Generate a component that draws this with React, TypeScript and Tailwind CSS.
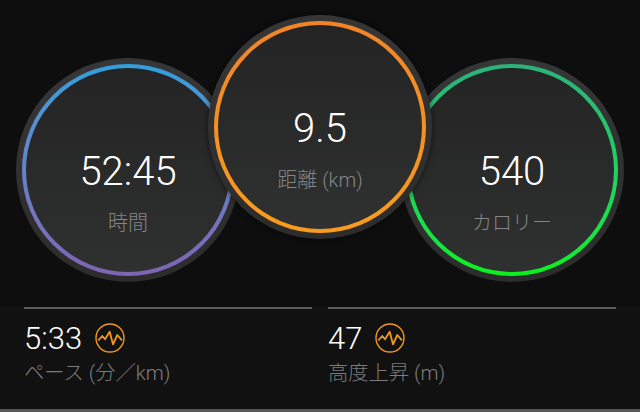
import React from 'react';

const JP = "font-['Roboto','Noto_Sans_CJK_JP',sans-serif]";

interface CircleProps {
  value: string;
  label: string;
  ring: string;
  offset: string;
  front?: boolean;
}

const Circle: React.FC<CircleProps> = ({ value, label, ring, offset, front }) => (
  <div
    className={`flex h-[224px] w-[224px] shrink-0 items-center justify-center rounded-full bg-gradient-to-b from-[#363636] to-[#2c2c2c] ${offset} ${
      front ? 'relative z-10 -mx-8 shadow-[0_0_6px_rgba(0,0,0,0.6)]' : ''
    }`}
  >
    <div className={`flex h-[212px] w-[212px] items-center justify-center rounded-full ${ring}`}>
      <div className="flex h-[204px] w-[204px] flex-col items-center rounded-full bg-gradient-to-b from-[#242424] to-[#2f3030]">
        <div className="mt-[82px] text-[40px] leading-[44px] font-light text-white">{value}</div>
        <div className="mt-[17px] text-[20px] leading-[24px] font-light text-[#858585]">{label}</div>
      </div>
    </div>
  </div>
);

const Stat: React.FC<{ value: string; label: string }> = ({ value, label }) => (
  <div className="w-[288px] border-t-2 border-[#5c5c5c] pt-[13px]">
    <div className="flex h-[32px] items-center">
      <span className="relative top-px text-[31px] leading-[32px] font-light text-white">{value}</span>
      <svg className="ml-[14px] -translate-x-px" width="31" height="31" viewBox="0 0 31 31" fill="none" stroke="#f0981e">
        <circle cx="15" cy="15" r="14" strokeWidth="1.4" />
        <path
          d="M3.3 17.3 L7.3 13 L10 16.3 L14.7 8.7 L18 21.3 L22.3 12 L27 17.3"
          strokeWidth="1.8"
          strokeLinejoin="round"
        />
      </svg>
    </div>
    <div className="mt-[7px] text-[20.3px] leading-[24px] font-light text-[#7c7c7c]">{label}</div>
  </div>
);

export default function App() {
  return (
    <div className={`${JP} flex h-[412px] w-[640px] flex-col overflow-hidden bg-[#0e0e0e]`}>
      <div className="flex h-[307px] shrink-0 justify-center">
        <Circle
          value="52:45"
          label="時間"
          ring="bg-gradient-to-b from-[#2f9fdc] to-[#7d64b4]"
          offset="mt-[58px]"
        />
        <Circle
          value="9.5"
          label="距離 (km)"
          ring="bg-gradient-to-b from-[#f28427] to-[#f89c1e]"
          offset="mt-[15px]"
          front
        />
        <Circle
          value="540"
          label="カロリー"
          ring="bg-gradient-to-b from-[#2cb27c] to-[#0cf01c]"
          offset="mt-[58px]"
        />
      </div>
      <div className="flex flex-1 justify-center gap-4 bg-[#111111]">
        <Stat value="5:33" label="ペース (分／km)" />
        <Stat value="47" label="高度上昇 (m)" />
      </div>
      <div className="h-[3px] shrink-0 bg-[#595959]" />
    </div>
  );
}
